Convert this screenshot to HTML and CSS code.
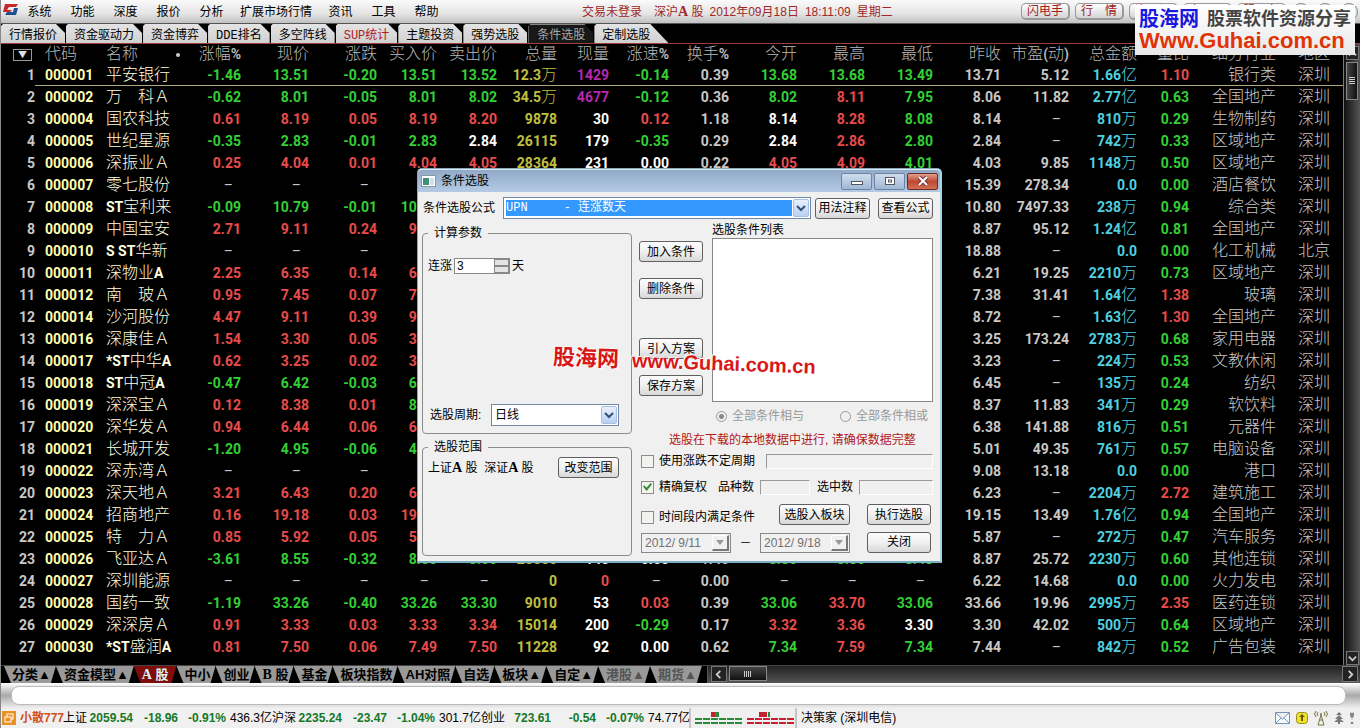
FILE: index.html
```html
<!DOCTYPE html>
<html lang="zh-CN">
<head>
<meta charset="utf-8">
<title>条件选股</title>
<link rel="stylesheet" href="styles.css">
</head>
<body>
<header class="topbar">
  <svg class="logo" viewBox="0 0 16 14" width="16" height="14"><path d="M3 1h13l-2 3H7L5 7h5L8 9H1z" fill="#c22a2e"/><path d="M12 5h4l-2 7H3l2-3h6z" fill="#1d4f94"/></svg>
  <nav class="menu">
    <button>系统</button><button>功能</button><button>深度</button><button>报价</button><button>分析</button><button class="wide">扩展市场行情</button><button>资讯</button><button>工具</button><button>帮助</button>
  </nav>
  <div class="session"><span>交易未登录</span><span>深沪<b>A</b> 股</span><time>2012年09月18日</time><time>18:11:09</time><span>星期二</span></div>
  <div class="quick">
    <button>闪电手</button><button>行　情</button><button>资　讯</button><button>交　易</button><button>服　务</button>
    <i class="round"></i><i class="round"></i><i class="round"></i>
  </div>
</header>
<nav class="tabs">
  <button>行情报价</button><button>资金驱动力</button><button>资金博弈</button><button><tt>DDE</tt>排名</button><button>多空阵线</button><button class="hot"><tt>SUP</tt>统计</button><button>主题投资</button><button>强势选股</button><button class="on">条件选股</button><button class="last">定制选股</button>
</nav>
<main class="market">
  <table class="quotes">
    <colgroup id="cols"></colgroup>
    <thead><tr id="head"></tr></thead>
    <tbody id="rows"></tbody>
  </table>
  <div class="vscroll">
    <button class="sb" aria-label="上"><svg viewBox="0 0 10 10"><path d="M1 7l4-4 4 4"/></svg></button>
    <div class="track"><button class="thumb" aria-label="滚动"><i></i></button></div>
    <button class="sb" aria-label="下"><svg viewBox="0 0 10 10"><path d="M1 3l4 4 4-4"/></svg></button>
  </div>
</main>
<nav class="sectors">
  <div class="sectors-list">
    <button>分类▲</button><button>资金模型▲</button><button class="on"><b>A</b> 股</button><button>中小</button><button>创业</button><button><b>B</b> 股</button><button>基金</button><button>板块指数</button><button>AH对照</button><button>自选</button><button>板块▲</button><button>自定▲</button><button class="dim">港股▲</button><button class="dim">期货▲</button>
  </div>
  <div class="hscroll">
    <button class="sb" aria-label="左"><svg viewBox="0 0 10 10"><path d="M7 1L3 5l4 4"/></svg></button>
    <button class="hthumb" aria-label="滚动"><i></i></button>
    <span class="grow"></span>
    <button class="sb" aria-label="右"><svg viewBox="0 0 10 10"><path d="M3 1l4 4-4 4"/></svg></button>
  </div>
</nav>
<div class="ticker"><input type="text" aria-label="消息"></div>
<footer class="status">
  <svg class="app" viewBox="0 0 14 14" width="14" height="14"><rect width="14" height="14" fill="#e89020"/><rect x="5" y="3" width="6" height="5" fill="none" stroke="#fff"/><rect x="3" y="6" width="6" height="5" fill="#e89020" stroke="#fff"/></svg>
  <strong class="user">小散777</strong>
  <div class="index"><span>上证</span><b>2059.54</b><b>-18.96</b><b>-0.91%</b><span>436.3亿</span></div>
  <div class="index"><span>沪深</span><b>2235.24</b><b>-23.47</b><b>-1.04%</b><span>301.7亿</span></div>
  <div class="index"><span>创业</span><b>723.61</b><b>-0.54</b><b>-0.07%</b><span>74.77亿</span></div>
  <svg class="meter" viewBox="0 0 108 20" width="108" height="20">
    <path d="M1 0v20M107 0v20" stroke="#999"/>
    <path d="M6 11h47M6 15h47" stroke="#2a8a3a" stroke-width="2" stroke-dasharray="7 1"/>
    <path d="M58 11h47M58 15h47" stroke="#c62030" stroke-width="2" stroke-dasharray="7 1"/>
    <path d="M22 4h4v5h-4zM70 4h8v5h-8z" fill="#c62030"/><path d="M26 4h4v5h-4zM79 4h2v5h-2z" fill="#2a8a3a"/>
  </svg>
  <span class="host">决策家 (深圳电信)</span>
  <div class="tray">
    <svg viewBox="0 0 15 12" width="15" height="12"><path d="M.5.5h14v11H.5zM1 1l6.500 6L14 1M1 11l5-5M14 11L9 6" fill="#f4fbff" stroke="#7894b4"/></svg>
    <svg viewBox="0 0 12 12" width="12" height="12"><rect x=".5" y=".5" width="11" height="11" rx="3" fill="#f0e030" stroke="#989010"/><path d="M6 2l3 3H7v4H5V5H3z" fill="#665c00"/></svg>
    <svg viewBox="0 0 14 16" width="14" height="16"><path d="M7 5L4 15h6zM5 10h4M4 2q-2 2 0 4M2 1q-3 3 0 6M10 2q2 2 0 4M12 1q3 3 0 6" fill="none" stroke="#777740"/><circle cx="7" cy="4" r="1" fill="#777740"/></svg>
    <svg viewBox="0 0 10 12" width="10" height="12"><path d="M5 0l3 3H2zM5 3l4 4H1zM5 6l5 4H0zM4 9h2v3H4z" fill="#777"/></svg>
    <svg viewBox="0 0 4 12" width="4" height="12"><path d="M0 1h4v3L2 6 0 4zM2 5v3M1 10h2v2H1z" fill="#888" stroke="#888" stroke-width=".5"/></svg>
  </div>
</footer>

<section class="dialog" role="dialog" aria-labelledby="dlg-title">
  <div class="titlebar">
    <svg viewBox="0 0 15 12" width="15" height="12"><rect x=".5" y=".5" width="14" height="11" fill="#fff" stroke="#899"/><rect x="2" y="3" width="6" height="7" fill="#3f9078"/><path d="M9 3h4v7H9z" fill="#cfe0e8"/></svg>
    <h1 id="dlg-title">条件选股</h1>
    <button class="wb" aria-label="最小化"><svg viewBox="0 0 12 10"><rect x=".5" y="5.500" width="11" height="3" fill="#fff" stroke="#556"/></svg></button>
    <button class="wb" aria-label="最大化"><svg viewBox="0 0 12 10"><rect x="1.500" y="1.500" width="9" height="7" fill="#fff" stroke="#556"/><rect x="4.500" y="4" width="3" height="2" fill="none" stroke="#556"/></svg></button>
    <button class="wb close" aria-label="关闭窗口"><svg viewBox="0 0 12 10"><path d="M2 1l8 8M10 1L2 9" stroke="#733" stroke-width="4"/><path d="M2 1l8 8M10 1L2 9" stroke="#fff" stroke-width="2"/></svg></button>
  </div>
  <form class="body">
    <div class="formula">
      <label for="formula">条件选股公式</label>
      <div class="combo picked"><select id="formula"><option>UPN&nbsp;&nbsp;&nbsp;&nbsp;&nbsp;- 连涨数天</option></select><span class="arrow"><svg viewBox="0 0 10 8"><path d="M1 2l4 4 4-4"/></svg></span></div>
      <div class="pair"><button type="button" class="btn">用法注释</button><button type="button" class="btn">查看公式</button></div>
    </div>
    <div class="split">
      <div class="left">
        <fieldset class="params">
          <legend>计算参数</legend>
          <div class="fields">
            <div class="line"><label for="days">连涨</label><div class="spin"><input id="days" type="text" value="3"><span><button type="button" aria-label="加"></button><button type="button" aria-label="减"></button></span></div><span>天</span></div>
            <div class="line cycle"><label for="period" class="period">选股周期:</label><div class="combo"><select id="period"><option>日线</option></select><span class="arrow"><svg viewBox="0 0 10 8"><path d="M1 2l4 4 4-4"/></svg></span></div></div>
          </div>
        </fieldset>
        <fieldset class="scope">
          <legend>选股范围</legend>
          <div class="line"><span class="markets">上证<b>A</b> 股&nbsp; 深证<b>A</b> 股</span><button type="button" class="btn">改变范围</button></div>
        </fieldset>
      </div>
      <div class="right">
        <div class="plan">
          <div class="actions">
            <button type="button" class="btn">加入条件</button><button type="button" class="btn">删除条件</button><button type="button" class="btn next">引入方案</button><button type="button" class="btn">保存方案</button>
          </div>
          <div class="listing">
            <label for="list">选股条件列表</label>
            <select id="list" size="8"></select>
            <div class="radios"><label><input type="radio" name="op" checked disabled>全部条件相与</label><label><input type="radio" name="op" disabled>全部条件相或</label></div>
          </div>
        </div>
        <p class="note">选股在下载的本地数据中进行, 请确保数据完整</p>
        <div class="opt"><label><input type="checkbox">使用涨跌不定周期</label><input class="ro long" type="text" aria-label="周期" disabled></div>
        <div class="opt"><label><input type="checkbox" checked>精确复权</label><label class="n1" for="kinds">品种数</label><input class="ro kinds" id="kinds" type="text" disabled><label class="n2" for="hits">选中数</label><input class="ro" id="hits" type="text" disabled></div>
        <div class="final">
          <label><input type="checkbox">时间段内满足条件</label>
          <button type="button" class="btn">选股入板块</button>
          <button type="button" class="btn">执行选股</button>
          <div class="range">
            <div class="date"><input type="text" value="2012/ 9/11" aria-label="开始日期" disabled><i></i></div><span>－</span><div class="date"><input type="text" value="2012/ 9/18" aria-label="结束日期" disabled><i></i></div>
          </div>
          <button type="button" class="btn">关闭</button>
        </div>
      </div>
    </div>
  </form>
</section>
<div class="stamp"><span class="zh">股海网</span><span class="url">www.Guhai.com.cn</span></div>
<aside class="brand"><div class="brand-top"><strong>股海网</strong><span>股票软件资源分享</span></div><div class="site">Www.Guhai.com.cn</div></aside>
<script src="quotes.js"></script>
</body>
</html>
```
FILE: styles.css
```css
* { box-sizing: border-box; }
body {
  margin: 0; height: 100vh; overflow: hidden;
  display: flex; flex-direction: column;
  background: #000; border-left: 1px solid #888;
  font: 12px/16px "Liberation Sans", "Noto Sans CJK SC", sans-serif;
  color: #000;
}
button, input, select { font: inherit; color: inherit; margin: 0; padding: 0; border: 0; border-radius: 0; background: none; }
button { white-space: nowrap; }

/* top bar */
.topbar { display: flex; align-items: center; height: 24px; flex: none; background: linear-gradient(#fafafa, #e4e4e4 60%, #c0c0c0); border-bottom: 1px solid #555; }
.logo { margin: 0 0 4px 1px; }
.menu { display: flex; }
.menu button { width: 43px; }
.menu button.wide { width: 86px; }
.session { display: flex; gap: 6px; margin-left: 134px; color: #a02828; }
.session b, .sectors b, .markets b { font-family: "Liberation Serif", serif; font-size: 14px; line-height: 12px; }
.session span:first-child { margin-right: 6px; }
.quick { display: flex; gap: 5px; margin-left: auto; align-items: center; padding-right: 2px; }
.quick button { width: 49px; height: 17px; line-height: 14px; border: 1px solid #999; border-right-width: 2px; border-bottom-width: 2px; border-radius: 5px; background: linear-gradient(#fff, #d4d4d4); color: #a02020; }
.round { width: 18px; height: 18px; border: 1px solid #888; border-radius: 50%; background: #e8e8e8; margin-left: 1px; }

/* page tabs */
.tabs { display: flex; flex: none; height: 20px; border-bottom: 1px solid #a04038; gap: 1px; }
.tabs button { padding: 2px 8px 0; background: linear-gradient(#e4e4e4, #d0d0d0); clip-path: polygon(0 2px, 2px 0, calc(100% - 9px) 0, 100% 9px, 100% 100%, 0 100%); line-height: 16px; }
.tabs .hot { color: #b02020; }
.tabs .on { background: #181818; color: #a8a8a8; border-top: 1px solid #888; border-left: 1px solid #888; padding-top: 1px; }
.tabs .last { padding-right: 18px; clip-path: polygon(0 2px, 2px 0, calc(100% - 18px) 0, 100% 100%, 0 100%); }
tt { font: 12px/12px "Liberation Mono", monospace; }

/* quotes */
.market { flex: 1; min-height: 0; display: flex; border-bottom: 1px solid #444; }
.quotes { flex: 1; width: 0; align-self: flex-start; table-layout: fixed; border-collapse: collapse; color: #c8c8c8; }
.quotes th, .quotes td { height: 22px; padding: 0; line-height: 20px; white-space: nowrap; text-align: right; font-family: Roboto, "Noto Sans CJK SC", sans-serif; font-weight: 700; font-size: 14px; }
.quotes th { height: 20px; line-height: 18px; color: #b8b8b8; }
.quotes .han { font: 16px/0 "Noto Sans CJK SC", sans-serif; font-weight: 300; }
.quotes tbody tr:first-child td:not(:first-child) { box-shadow: inset 0 -1px #b0a878; }
.quotes .code { text-align: left; padding-left: 10px; color: #ffffb0; }
.quotes .name { text-align: left; color: #ffffe0; }
.quotes th.code, .quotes th.name { color: #b8b8b8; }
.quotes .last { padding-right: 13px; }
.quotes .none { padding-right: 8px; font-weight: 400; }
.filter { display: inline-flex; width: 19px; height: 12px; border: 1px solid #999; justify-content: center; align-items: center; font-size: 9px; margin-right: 3px; vertical-align: middle; color: #ddd; }
.dot { display: inline-block; width: 4px; height: 4px; border-radius: 50%; background: #ccc; margin-left: 38px; vertical-align: middle; }
.up { color: #e84c4c; }
.down { color: #34d034; }
.flat { color: #fff; }
.vol { color: #c0c040; }
.big { color: #b428b4; }
.amt { color: #50d0e0; }

/* scroll bars */
.vscroll { width: 17px; flex: none; display: flex; flex-direction: column; align-items: center; background: linear-gradient(90deg, #111, #555); border-left: 1px solid #777; padding-top: 2px; }
.track { flex: 1; }
.sb { width: 13px; height: 14px; border: 1px solid #777; background: #222; display: grid; place-items: center; }
.sb svg { width: 9px; height: 9px; fill: none; stroke: #ccc; stroke-width: 2; }
.thumb { width: 12px; height: 38px; margin-top: 2px; border: 1px solid #888; background: linear-gradient(90deg, #444, #111); display: grid; place-items: center; }
.thumb i { width: 6px; height: 8px; background: repeating-linear-gradient(#ccc 0 1px, transparent 1px 2px); }
.sectors { display: flex; flex: none; height: 17px; background: linear-gradient(#222, #555); }
.sectors-list { display: flex; background: #000; padding: 0 5px 0 3px; }
.sectors button { font-size: 13px; font-weight: 700; line-height: 16px; }
.sectors-list button { padding: 0 5px 0 8px; background: #999; clip-path: polygon(0 0, 100% 0, calc(100% - 5px) 100%, 7px 100%); }
.sectors-list .on { background: #800c0c; color: #d8f4f4; padding: 0 8px; }
.sectors-list .dim { color: #555; }
.hscroll { flex: 1; display: flex; gap: 2px; padding: 0 2px 0 3px; border-left: 1px solid #555; }
.hscroll .sb { width: 16px; height: 16px; }
.hthumb { width: 38px; height: 15px; border: 1px solid #888; background: linear-gradient(#444, #111); display: grid; place-items: center; }
.hthumb i { width: 8px; height: 6px; background: repeating-linear-gradient(90deg, #ccc 0 1px, transparent 1px 2px); }
.grow { flex: 1; }

/* footer */
.ticker { flex: none; height: 25px; padding: 3px 14px 3px 10px; background: linear-gradient(#fff, #aaa 50%, #eee); display: flex; }
.ticker input { flex: 1; background: #fff; border: 1px solid #bbb; border-radius: 8px; }
.status { flex: none; height: 20px; display: flex; align-items: center; background: #f0f0f0; white-space: nowrap; padding: 0 6px 0 1px; }
.user { width: 43px; margin-left: 4px; color: #d05020; }
.index { display: grid; grid-template-columns: 24px 46px 45px 48px 46px; text-align: right; }
.index b { color: #147828; }
.meter { margin-left: -1px; }
.host { margin-left: 4px; }
.tray { display: flex; gap: 6px; margin-left: auto; align-items: center; }

/* dialog */
.dialog { position: absolute; left: 417px; top: 168px; width: 525px; background: #f0f0f0; border: 1px solid #8ab; border-right: 2px solid #a0d8e8; border-bottom: 2px solid #78b0c0; border-radius: 5px 5px 0 0; }
.titlebar { display: flex; align-items: center; gap: 2px; height: 23px; padding: 0 2px 0 3px; background: linear-gradient(#90aac8, #b4cae4); border-top: 1px solid #dce8f4; border-radius: 4px 4px 0 0; }
.titlebar h1 { flex: 1; margin: 0 0 0 3px; font-size: 12px; font-weight: 400; }
.wb { width: 31px; height: 17px; border: 1px solid #6c84a4; border-radius: 2px; background: linear-gradient(#cfdcec, #a0b8d4); display: grid; place-items: center; }
.wb svg { width: 12px; height: 10px; }
.wb.close { background: linear-gradient(#e0a090, #c04830 50%, #d07058); border-color: #702820; }
.body { padding: 5px 7px 5px 4px; }
.btn { height: 21px; line-height: 18px; border: 1px solid #606060; border-radius: 3px; background: linear-gradient(#fcfcfc, #f0f0f0 50%, #d8d8d8); }
.formula { display: flex; align-items: center; gap: 8px; margin-left: 1px; }
.pair { display: grid; grid-template-columns: 55px 55px; gap: 8px; margin-left: -4px; }
.combo { position: relative; display: flex; border: 1px solid #7088a8; background: #fff; height: 22px; flex: 1; }
.combo select { appearance: none; flex: 1; min-width: 0; padding-left: 3px; }
.picked select { background: #3399ff; color: #fff; margin: 2px 18px 2px 2px; padding-left: 0; font-family: "Liberation Mono", "Noto Sans CJK SC", monospace; }
.arrow { position: absolute; right: 1px; top: 1px; bottom: 1px; width: 16px; border: 1px solid #a8c0e0; border-radius: 2px; background: linear-gradient(#e8f0fc, #b8d0f0); display: grid; place-items: center; pointer-events: none; }
.arrow svg { width: 10px; height: 8px; fill: none; stroke: #345078; stroke-width: 2; }
.split { display: grid; grid-template-columns: 210px 1fr; column-gap: 7px; padding-top: 3px; }
.left { display: flex; flex-direction: column; gap: 5px; padding-top: 3px; }
fieldset { min-width: 0; margin: 0; border: 1px solid #8c8c8c; border-radius: 4px; padding: 0 5px; }
legend { padding: 0 6px; }
.line { display: flex; align-items: center; }
.fields { display: flex; flex-direction: column; justify-content: space-between; height: 192px; padding: 17px 7px 7px 0; }
.cycle { padding-left: 2px; }
.period { width: 61px; }
.scope { flex: 1; }
.scope .line { justify-content: space-between; padding: 2px 7px 0 0; }
.scope .btn { width: 61px; }
.spin { display: flex; width: 56px; height: 16px; margin: 0 2px; border: 1px solid #888; background: #fff; }
.spin input { width: 39px; padding-left: 2px; }
.spin span { flex: 1; display: grid; }
.spin button { border: 1px solid #888; background: #e4e4e4; }
.plan { display: grid; grid-template-columns: 64px 1fr; column-gap: 9px; }
.actions { display: flex; flex-direction: column; gap: 16px; padding-top: 19px; }
.actions .next { margin-top: 23px; }
.listing { display: flex; flex-direction: column; }
#list { height: 164px; background: #fff; border: 1px solid #888; }
.radios { display: flex; justify-content: space-between; padding: 6px 5px 0 4px; color: #999; }
.right label { display: flex; align-items: center; }
.radios input { width: 11px; height: 11px; margin-right: 5px; appearance: none; border: 1px solid #999; border-radius: 50%; }
.radios input:checked { background: radial-gradient(#888 2px, #f0f0f0 3px); }
.note { margin: 8px 0 0 30px; color: #b01818; }
.opt { display: flex; align-items: center; height: 26px; }
input[type="checkbox"] { appearance: none; width: 13px; height: 13px; margin: 0 5px 0 2px; border: 1px solid #8c8c8c; background: #f4f2ee; display: grid; place-items: center; }
input[type="checkbox"]:checked::before { content: ""; width: 9px; height: 8px; background: #2c8c2c; clip-path: polygon(0 40%, 15% 30%, 40% 60%, 85% 0, 100% 15%, 40% 100%); }
.ro { flex: 1; min-width: 0; height: 15px; border: 1px solid #999; border-right-color: #fff; border-bottom-color: #fff; }
.long { margin-left: 11px; }
.n1 { margin: 0 6px 0 11px; }
.n2 { margin: 0 6px 0 7px; }
.kinds { flex: none; width: 50px; }
.final { display: grid; grid-template-columns: 1fr 71px 64px; align-items: center; row-gap: 6px; column-gap: 17px; padding: 4px 2px 3px 0; }
.final label { padding-top: 5px; }
.range { grid-column: 1 / 3; display: flex; align-items: center; padding: 2px 0 0 2px; }
.range span { width: 30px; text-align: center; }
.date { display: flex; width: 90px; height: 20px; border: 1px solid #888; padding: 1px; }
.date input { flex: 1; min-width: 0; padding-left: 2px; color: #707070; }
.date i { width: 17px; border: 1px solid #fff; border-right: 2px solid #777; border-bottom: 2px solid #777; display: grid; place-items: center; }
.date i::after { content: ""; border: 4px solid transparent; border-top: 5px solid #999; border-bottom: 0; }

/* watermarks */
.stamp { position: absolute; left: 553px; top: 342px; display: flex; gap: 13px; align-items: center; color: #d81818; font-weight: 700; transform: rotate(2deg); pointer-events: none; text-shadow: 1px 1px 0 #fff, -1px -1px 0 #fff; white-space: nowrap; }
.stamp .zh { font-size: 22px; line-height: 24px; }
.stamp .url { font-size: 20px; line-height: 40px; }
.brand { position: absolute; right: 5px; top: 5px; width: 220px; height: 50px; padding: 2px 4px; background: linear-gradient(#fff, #e8e8e8); white-space: nowrap; }
.brand-top { display: flex; justify-content: space-between; align-items: center; height: 23px; }
.brand strong { font-size: 20px; color: #1818e0; }
.brand span { font-size: 18px; font-weight: 700; color: #444; }
.site { font: 700 22px/22px "Liberation Sans", sans-serif; color: #e03408; }
```
FILE: quotes.js
```js
const heads = ["", "代码", "名称", "涨幅%", "现价", "涨跌", "买入价", "卖出价", "总量", "现量", "涨速%", "换手%", "今开", "最高", "最低", "昨收", "市盈(动)", "总金额", "量比", "细分行业", "地区"];
const widths = [34, 71, 80, 55, 68, 68, 60, 60, 60, 52, 60, 60, 68, 68, 68, 68, 68, 68, 52, 87, 0];
const data = `000001|平安银行|-1.46|13.51|-0.20|13.51|13.52|12.3万|1429|-0.14|0.39|13.68|13.68|13.49|13.71|5.12|1.66亿|1.10|银行类
000002|万　科Ａ|-0.62|8.01|-0.05|8.01|8.02|34.5万|4677|-0.12|0.36|8.02|8.11|7.95|8.06|11.82|2.77亿|0.63|全国地产
000004|国农科技|0.61|8.19|0.05|8.19|8.20|9878|30|0.12|1.18|8.14|8.28|8.08|8.14|–|810万|0.29|生物制药
000005|世纪星源|-0.35|2.83|-0.01|2.83|2.84|26115|179|-0.35|0.29|2.84|2.86|2.80|2.84|–|742万|0.33|区域地产
000006|深振业Ａ|0.25|4.04|0.01|4.04|4.05|28364|231|0.00|0.22|4.05|4.09|4.01|4.03|9.85|1148万|0.50|区域地产
000007|零七股份|–|–|–||||||||||15.39|278.34|0.0|0.00|酒店餐饮
000008|ST宝利来|-0.09|10.79|-0.01|10.79|||||||||10.80|7497.33|238万|0.94|综合类
000009|中国宝安|2.71|9.11|0.24|9.11|||||||||8.87|95.12|1.24亿|0.81|全国地产
000010|S ST华新|–|–|–||||||||||18.88|–|0.0|0.00|化工机械|北京
000011|深物业A|2.25|6.35|0.14|6.35|||||||||6.21|19.25|2210万|0.73|区域地产
000012|南　玻Ａ|0.95|7.45|0.07|7.45|||||||||7.38|31.41|1.64亿|1.38|玻璃
000014|沙河股份|4.47|9.11|0.39|9.11|||||||||8.72|–|1.63亿|1.30|全国地产
000016|深康佳Ａ|1.54|3.30|0.05|3.30|||||||||3.25|173.24|2783万|0.68|家用电器
000017|*ST中华A|0.62|3.25|0.02|3.25|||||||||3.23|–|224万|0.53|文教休闲
000018|ST中冠A|-0.47|6.42|-0.03|6.42|||||||||6.45|–|135万|0.24|纺织
000019|深深宝Ａ|0.12|8.38|0.01|8.36|||||||||8.37|11.83|341万|0.29|软饮料
000020|深华发Ａ|0.94|6.44|0.06|6.44|||||||||6.38|141.88|816万|0.51|元器件
000021|长城开发|-1.20|4.95|-0.06|4.95|||||||||5.01|49.35|761万|0.57|电脑设备
000022|深赤湾Ａ|–|–|–||||||||||9.08|13.18|0.0|0.00|港口
000023|深天地Ａ|3.21|6.43|0.20|6.43|||||||||6.23|–|2204万|2.72|建筑施工
000024|招商地产|0.16|19.18|0.03|19.18|||||||||19.15|13.49|1.76亿|0.94|全国地产
000025|特　力Ａ|0.85|5.92|0.05|5.92|||||||||5.87|–|272万|0.47|汽车服务
000026|飞亚达Ａ|-3.61|8.55|-0.32|8.55|8.56|26066|146|0.00|1.40|8.86|8.86|8.48|8.87|25.72|2230万|0.60|其他连锁
000027|深圳能源|–|–|–|–|–|0|0|–|0.00|–|–|–|6.22|14.68|0.0|0.00|火力发电
000028|国药一致|-1.19|33.26|-0.40|33.26|33.30|9010|53|0.03|0.39|33.06|33.70|33.06|33.66|19.96|2995万|2.35|医药连锁
000029|深深房Ａ|0.91|3.33|0.03|3.33|3.34|15014|200|-0.29|0.17|3.32|3.36|3.30|3.30|42.02|500万|0.64|区域地产
000030|*ST盛润A|0.81|7.50|0.06|7.49|7.50|11228|92|0.00|0.62|7.34|7.59|7.34|7.44|–|842万|0.52|广告包装`;

const text = s => s.replace(/[^\x00-\x7f–]+/g, m => `<span class="han">${m}</span>`);
const trend = d => d > 0 ? "up" : d < 0 ? "down" : "flat";

function tone(col, v, prev) {
  if (v === "–") return "none";
  if (col === 1) return "code";
  if (col === 2) return "name";
  if ([3, 5, 10].includes(col)) return trend(parseFloat(v));
  if ([4, 6, 7, 12, 13, 14].includes(col)) return trend(v - prev);
  if (col === 8) return "vol";
  if (col === 9) return v === "0" ? "up" : v > 1000 ? "big" : "flat";
  if (col === 17) return "amt";
  if (col === 18) return v > 1 ? "up" : "down";
  return col === 20 ? "last" : "";
}

document.getElementById("cols").innerHTML = widths.map(w => w ? `<col style="width:${w}px">` : "<col>").join("");
document.getElementById("head").innerHTML = heads.map((h, i) => {
  const cls = i === 1 ? "code" : i === 2 ? "name" : i === 20 ? "last" : "";
  const body = i === 0 ? '<span class="filter">▼</span>' : text(h) + (i === 2 ? '<i class="dot"></i>' : "");
  return `<th class="${cls}">${body}</th>`;
}).join("");
document.getElementById("rows").innerHTML = data.split("\n").map((line, r) => {
  const c = [String(r + 1), ...line.split("|")];
  const tail = c[c.length - 1] === "北京" ? c.splice(-1)[0] : "深圳";
  const end = c.slice(-5);
  const cells = c.slice(0, -5);
  while (cells.length < 15) cells.push("");
  const all = [...cells.slice(0, 15), ...end, tail];
  return "<tr>" + all.map((v, i) => `<td class="${tone(i, v, end[0])}">${text(v)}</td>`).join("") + "</tr>";
}).join("");
```
